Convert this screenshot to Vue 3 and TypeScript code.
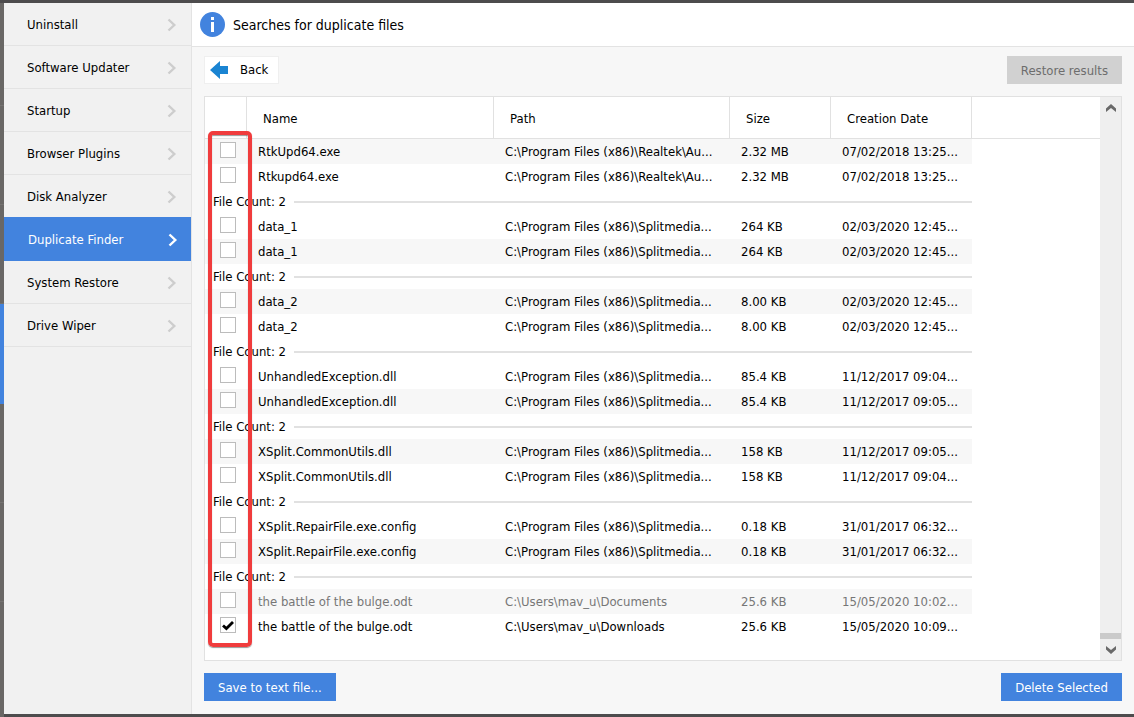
<script setup lang="ts">
import { ref } from 'vue'

interface FileRow {
  name: string
  path: string
  size: string
  date: string
  checked?: boolean
  locked?: boolean
}

const navItems: string[] = [
  'Uninstall',
  'Software Updater',
  'Startup',
  'Browser Plugins',
  'Disk Analyzer',
  'Duplicate Finder',
  'System Restore',
  'Drive Wiper',
]
const active = ref('Duplicate Finder')

const realtek = 'C:\\Program Files (x86)\\Realtek\\Au...'
const split = 'C:\\Program Files (x86)\\Splitmedia...'

const groups = ref<FileRow[][]>([
  [
    { name: 'RtkUpd64.exe', path: realtek, size: '2.32 MB', date: '07/02/2018 13:25...' },
    { name: 'Rtkupd64.exe', path: realtek, size: '2.32 MB', date: '07/02/2018 13:25...' },
  ],
  [
    { name: 'data_1', path: split, size: '264 KB', date: '02/03/2020 12:45...' },
    { name: 'data_1', path: split, size: '264 KB', date: '02/03/2020 12:45...' },
  ],
  [
    { name: 'data_2', path: split, size: '8.00 KB', date: '02/03/2020 12:45...' },
    { name: 'data_2', path: split, size: '8.00 KB', date: '02/03/2020 12:45...' },
  ],
  [
    { name: 'UnhandledException.dll', path: split, size: '85.4 KB', date: '11/12/2017 09:04...' },
    { name: 'UnhandledException.dll', path: split, size: '85.4 KB', date: '11/12/2017 09:05...' },
  ],
  [
    { name: 'XSplit.CommonUtils.dll', path: split, size: '158 KB', date: '11/12/2017 09:05...' },
    { name: 'XSplit.CommonUtils.dll', path: split, size: '158 KB', date: '11/12/2017 09:04...' },
  ],
  [
    { name: 'XSplit.RepairFile.exe.config', path: split, size: '0.18 KB', date: '31/01/2017 06:32...' },
    { name: 'XSplit.RepairFile.exe.config', path: split, size: '0.18 KB', date: '31/01/2017 06:32...' },
  ],
  [
    { name: 'the battle of the bulge.odt', path: 'C:\\Users\\mav_u\\Documents', size: '25.6 KB', date: '15/05/2020 10:02...', locked: true },
    { name: 'the battle of the bulge.odt', path: 'C:\\Users\\mav_u\\Downloads', size: '25.6 KB', date: '15/05/2020 10:09...', checked: true },
  ],
])
</script>

<template>
  <div class="window">
    <div class="rail">
      <span v-for="n in 7" :key="n" class="rail-item" :class="{ current: n === 4 }"></span>
    </div>

    <div class="body">
      <nav class="sidebar">
        <button
          v-for="item in navItems"
          :key="item"
          type="button"
          class="nav-item"
          :class="{ active: item === active }"
          @click="active = item"
        >
          <span>{{ item }}</span>
          <svg width="10" height="14" viewBox="0 0 10 14" aria-hidden="true">
            <path d="M1.5 1.5 L7.3 7 L1.5 12.5" fill="none" stroke="currentColor" stroke-width="2.4" />
          </svg>
        </button>
      </nav>

      <main class="main">
        <header class="header">
          <svg width="25" height="25" viewBox="0 0 25 25" aria-hidden="true">
            <circle cx="12.5" cy="12.5" r="12.5" fill="#4283de" />
            <rect x="11" y="5" width="3" height="3" fill="#fff" />
            <rect x="11" y="10" width="3" height="10" fill="#fff" />
          </svg>
          <h1>Searches for duplicate files</h1>
        </header>

        <div class="content">
          <div class="bar">
            <button type="button" class="back">
              <svg width="18" height="18" viewBox="0 0 18 18" aria-hidden="true">
                <path d="M0 9 L10 0 V5 H18 V13 H10 V18 Z" fill="#1a84d2" />
              </svg>
              <span>Back</span>
            </button>
            <button type="button" class="btn disabled" disabled>Restore results</button>
          </div>

          <section class="panel">
            <div class="table-area">
              <table>
                <colgroup>
                  <col class="c-check" />
                  <col class="c-name" />
                  <col class="c-path" />
                  <col class="c-size" />
                  <col class="c-date" />
                  <col />
                </colgroup>
                <thead>
                  <tr>
                    <th></th>
                    <th>Name</th>
                    <th>Path</th>
                    <th>Size</th>
                    <th>Creation Date</th>
                    <th></th>
                  </tr>
                </thead>
                <tbody v-for="(files, g) in groups" :key="g">
                  <tr v-if="g > 0">
                    <td colspan="5" class="count">
                      <div class="count-line"><span>File Count: 2</span><i></i></div>
                    </td>
                    <td></td>
                  </tr>
                  <tr
                    v-for="(file, i) in files"
                    :key="i"
                    :class="{ shaded: (g + i) % 2 === 0, locked: file.locked }"
                  >
                    <td class="check">
                      <input
                        v-model="file.checked"
                        type="checkbox"
                        :disabled="file.locked"
                        :aria-label="file.name"
                      />
                    </td>
                    <td>{{ file.name }}</td>
                    <td>{{ file.path }}</td>
                    <td>{{ file.size }}</td>
                    <td>{{ file.date }}</td>
                    <td class="rest"></td>
                  </tr>
                </tbody>
              </table>
              <div class="marker"></div>
            </div>
            <div class="scrollbar">
              <button type="button" aria-label="Scroll up">
                <svg width="10" height="8" viewBox="0 0 10 8" aria-hidden="true">
                  <path d="M0 4.6 L5 0 L10 4.6 V8 L5 4 L0 8 Z" fill="#696969" />
                </svg>
              </button>
              <span class="thumb"></span>
              <button type="button" aria-label="Scroll down">
                <svg width="10" height="8" viewBox="0 0 10 8" aria-hidden="true">
                  <path d="M0 3.4 L5 8 L10 3.4 V0 L5 4 L0 0 Z" fill="#696969" />
                </svg>
              </button>
            </div>
          </section>

          <div class="bar">
            <button type="button" class="btn">Save to text file...</button>
            <button type="button" class="btn">Delete Selected</button>
          </div>
        </div>
      </main>
    </div>
  </div>
</template>

<style>
body {
  margin: 0;
}
</style>

<style scoped>
.window {
  box-sizing: border-box;
  display: flex;
  min-height: 100vh;
  border-top: 3px solid #4d4c4d;
  background: #f7f7f7;
  color: #000;
  font: 13px/16px Tahoma, 'DejaVu Sans Condensed', 'DejaVu Sans', sans-serif;
}
button {
  margin: 0;
  border: 0;
  padding: 0;
  background: none;
  color: inherit;
  font: inherit;
}
svg {
  display: block;
  flex: none;
}
.rail {
  display: flex;
  flex-direction: column;
  width: 4px;
  background: #696765;
}
.rail-item {
  box-sizing: border-box;
  height: 99px;
  border-bottom: 1px solid #757371;
}
.rail-item:first-child {
  height: 103px;
}
.rail-item.current {
  height: 100px;
  background: #4283de;
  border-color: #4283de;
}
.rail-item:last-child {
  border: 0;
}
.body {
  display: flex;
  flex: 1;
  min-width: 0;
  border-bottom: 3px solid #4d4c4d;
}
.sidebar {
  display: flex;
  flex-direction: column;
  width: 187px;
  border-right: 1px solid #e3e3e3;
  background: #f1f1f1;
}
.nav-item {
  box-sizing: border-box;
  display: flex;
  align-items: center;
  justify-content: space-between;
  height: 43px;
  padding: 1px 14px 0 23px;
  border-bottom: 1px solid #e3e3e3;
}
.nav-item svg {
  color: #cdcdcd;
}
.nav-item.active {
  height: 44px;
  margin-top: -1px;
  padding: 3px 13px 0 24px;
  border-color: #4283de;
  background: #4283de;
  color: #fff;
}
.nav-item.active svg {
  color: #fff;
}
.main {
  display: flex;
  flex: 1;
  flex-direction: column;
  min-width: 0;
}
.header {
  display: flex;
  align-items: center;
  gap: 8px;
  height: 43px;
  padding-left: 8px;
  border-bottom: 1px solid #e3e3e3;
  background: #fff;
}
h1 {
  margin: 0;
  font-size: 14px;
  font-weight: normal;
}
.content {
  display: flex;
  flex: 1;
  flex-direction: column;
  gap: 12px;
  padding: 9px 12px 13px;
}
.bar {
  display: flex;
  justify-content: space-between;
}
.back {
  box-sizing: border-box;
  display: flex;
  align-items: center;
  gap: 12px;
  height: 28px;
  padding: 0 10px 0 5px;
  border: 1px solid #efefef;
  background: #fff;
}
.btn {
  height: 28px;
  padding: 1px 14px 0;
  background: #4283de;
  color: #fff;
}
.btn.disabled {
  background: #d1d1d1;
  color: #6d6d6d;
}
.panel {
  display: flex;
  flex: 1;
  border: 1px solid #e1e1e1;
  background: #fff;
}
.table-area {
  position: relative;
  flex: 1;
  min-width: 0;
}
table {
  width: 100%;
  border-spacing: 0;
  table-layout: fixed;
}
.c-check {
  width: 42px;
}
.c-name {
  width: 247px;
}
.c-path {
  width: 236px;
}
.c-size {
  width: 101px;
}
.c-date {
  width: 141px;
}
th {
  box-sizing: border-box;
  height: 42px;
  padding: 2px 0 0 16px;
  border-right: 1px solid #e1e1e1;
  border-bottom: 1px solid #e1e1e1;
  font-weight: normal;
  text-align: left;
}
th:last-child {
  border-right: 0;
}
td {
  height: 25px;
  padding: 0 0 0 11px;
  white-space: nowrap;
}
.shaded td {
  background: #f7f7f7;
}
.shaded .rest {
  background: none;
}
.locked td {
  color: #767676;
}
.check {
  padding-left: 15px;
}
input {
  display: block;
  appearance: none;
  box-sizing: border-box;
  width: 16px;
  height: 16px;
  margin: 0 0 3px;
  border: 1px solid #bcbcbc;
  background: #fff;
}
input:checked {
  background: #fff
    url("data:image/svg+xml,%3Csvg xmlns='http://www.w3.org/2000/svg' viewBox='0 0 14 14'%3E%3Cpath d='M2 7.5 L5.4 10.6 L12 4' fill='none' stroke='%23000' stroke-width='2.8'/%3E%3C/svg%3E")
    center / 14px 14px no-repeat;
}
.count {
  padding-left: 8px;
}
.count-line {
  display: flex;
  align-items: center;
  gap: 8px;
}
.count-line i {
  flex: 1;
  height: 2px;
  background: #e1e1e1;
}
.marker {
  position: absolute;
  top: 34px;
  bottom: 13px;
  left: 3px;
  box-sizing: border-box;
  width: 44px;
  border: 4px solid #f03c3d;
  border-radius: 5px;
  box-shadow: 0 1px 1px rgba(0, 0, 0, 0.4), inset 0 1px 1px rgba(0, 0, 0, 0.4);
  pointer-events: none;
}
.scrollbar {
  display: flex;
  flex-direction: column;
  width: 21px;
  background: #efefef;
}
.scrollbar button {
  display: flex;
  align-items: center;
  justify-content: center;
  height: 21px;
}
.thumb {
  height: 6px;
  margin-top: auto;
  background: #cacaca;
}
</style>
